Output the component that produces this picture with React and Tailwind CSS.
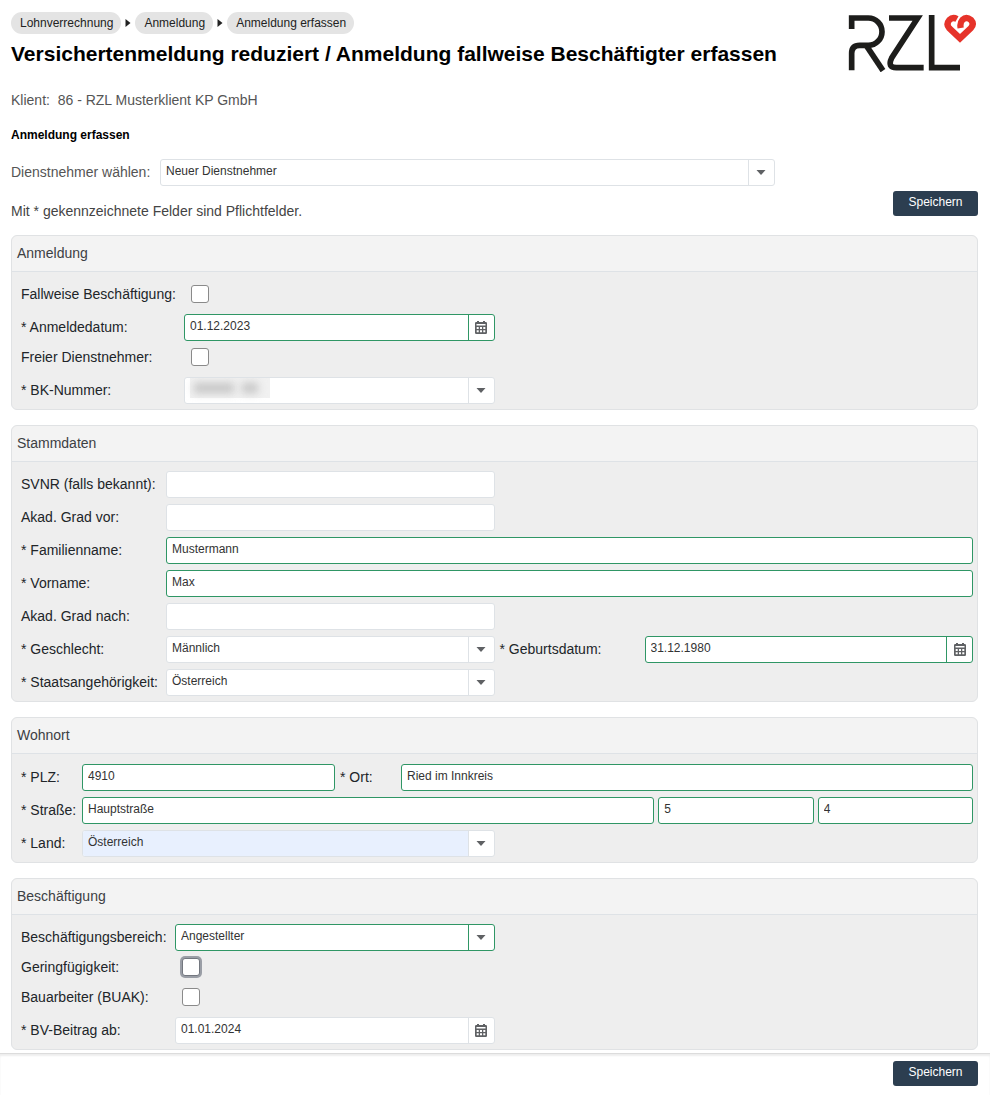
import React, { useId } from "react";

const FONT = "font-['Liberation_Sans',Arial,sans-serif]";

function Logo() {
  return (
    <svg viewBox="57 40 390 180" className="h-[60px] w-[130px] shrink-0" role="img" aria-label="RZL">
      <g fill="none" stroke="#1d1d1b" strokeWidth="17">
        <path d="M68 91V58H118A41 41 0 0 1 118 140H92Q68 140 68 164V215" />
        <path d="M114 144L162 216" />
        <path d="M180 58H266L188 178Q174 207 202 207H284" />
        <path d="M308 49V207H393" />
      </g>
      <path
        d="M384 61Q371 54 361 64Q350 77 361 89L393 119L425 89Q437 76 426 64Q412 52 400 64Q392 73 395 88"
        fill="none"
        stroke="#e6332a"
        strokeWidth="19"
      />
    </svg>
  );
}

function CalendarIcon() {
  return (
    <svg viewBox="0 0 12 13" className="h-[13px] w-3" aria-hidden="true">
      <path
        fill="#5f6164"
        fillRule="evenodd"
        d="M2 0h2v1h4V0h2v1h.8Q12 1 12 2.200V11.800Q12 13 10.800 13H1.200Q0 13 0 11.800V2.200Q0 1 1.200 1H2zM1.500 3v1.500h9V3zM1.700 6v2h2V6zM5 6v2h2V6zM8.300 6v2h2V6zM1.700 9.300v2h2v-2zM5 9.300v2h2v-2zM8.300 9.300v2h2v-2z"
      />
    </svg>
  );
}

function Caret() {
  return (
    <svg viewBox="0 0 10 5" className="h-[5px] w-[10px]" aria-hidden="true">
      <path d="M0.500 0h9L5 5z" fill="#5f6164" />
    </svg>
  );
}

const FRAME = "flex h-[27px] min-w-0 flex-1 overflow-hidden rounded-[3px] border bg-white";
const CONTROL = "min-w-0 flex-1 appearance-none bg-transparent pb-1 pl-[5px] text-[12px] text-[#333] outline-none";

function Frame({ valid, children }) {
  return <div className={`${FRAME} ${valid ? "border-[#2f9665]" : "border-[#dee2e6]"}`}>{children}</div>;
}

function TextBox({ id, value = "", valid, label }) {
  return (
    <Frame valid={valid}>
      <input id={id} type="text" aria-label={label} defaultValue={value} className={CONTROL} />
    </Frame>
  );
}

function DateBox({ id, value, valid }) {
  return (
    <Frame valid={valid}>
      <input id={id} type="text" defaultValue={value} className={CONTROL} />
      <button
        type="button"
        aria-label="Kalender"
        className={`flex w-[26px] items-center justify-center border-l ${valid ? "border-[#2f9665]" : "border-[#dee2e6]"}`}
      >
        <CalendarIcon />
      </button>
    </Frame>
  );
}

function SelectBox({ id, value, valid, tinted, hidden }) {
  return (
    <Frame valid={valid}>
      <div className={`flex min-w-0 flex-1 items-stretch ${tinted ? "bg-[#e8f0fe]" : ""}`}>
        {hidden && (
          <span className="ml-[5px] flex h-5 w-20 items-center gap-2 bg-[#f1f1f1] pl-1">
            <span className="block h-[10px] w-10 bg-[#c4c4c4] blur-xs" />
            <span className="block h-[10px] w-4 bg-[#c4c4c4] blur-xs" />
          </span>
        )}
        <select id={id} className={CONTROL}>
          <option>{value}</option>
        </select>
      </div>
      <span
        className={`flex w-[26px] items-center justify-center border-l ${valid ? "border-[#2f9665]" : "border-[#dee2e6]"}`}
      >
        <Caret />
      </span>
    </Frame>
  );
}

function Field({ label, labelWidth, labelColor = "text-[#212529]", as: Box, className = "", ...rest }) {
  const id = useId();
  return (
    <div className={`flex min-w-0 items-center ${className}`}>
      <label htmlFor={id} className={`shrink-0 text-[14px] whitespace-nowrap ${labelColor} ${labelWidth}`}>
        {label}
      </label>
      <Box id={id} {...rest} />
    </div>
  );
}

function Check({ label, labelWidth, focused }) {
  const id = useId();
  return (
    <div className="flex h-6 items-center pb-1">
      <label htmlFor={id} className={`shrink-0 text-[14px] whitespace-nowrap text-[#212529] ${labelWidth}`}>
        {label}
      </label>
      <input
        id={id}
        type="checkbox"
        className={`ml-[7px] h-[18px] w-[18px] appearance-none rounded-[3px] border bg-white ${
          focused ? "border-[#73777f] ring-2 ring-[#9a9ea6]" : "border-[#8a8a8a]"
        }`}
      />
    </div>
  );
}

function Panel({ title, top = "pt-[9px]", children }) {
  return (
    <section className="rounded-md border border-[#e0e2e4] bg-[#eee]">
      <h2 className="flex h-9 items-center rounded-t-md border-b border-[#dee2e6] bg-[#f3f3f3] px-[5px] text-[14px] text-[#3c4043]">
        {title}
      </h2>
      <div className={`grid gap-x-[5px] gap-y-[6px] pr-1 pb-[5px] pl-[9px] ${top}`}>{children}</div>
    </section>
  );
}

function Half({ children }) {
  return <div className="grid grid-cols-2 gap-x-[5px]">{children}</div>;
}

function SaveButton() {
  return (
    <button type="button" className="h-[25px] w-[85px] shrink-0 rounded-[3px] bg-[#2c3e50] pb-[3px] text-[12px] text-white">
      Speichern
    </button>
  );
}

function Crumbs() {
  const items = ["Lohnverrechnung", "Anmeldung", "Anmeldung erfassen"];
  return (
    <nav aria-label="Navigationspfad" className="flex items-center">
      {items.map((item, i) => (
        <React.Fragment key={item}>
          {i > 0 && (
            <svg viewBox="0 0 5 8" className="mx-1 h-2 w-[6px]" aria-hidden="true">
              <path d="M0 0l5 4-5 4z" fill="#222" />
            </svg>
          )}
          <a href="#" className="flex h-[22px] items-center rounded-full bg-[#e4e4e4] pr-2 pl-[9px] text-[12px] text-[#222]">
            {item}
          </a>
        </React.Fragment>
      ))}
    </nav>
  );
}

export default function App() {
  const a = "w-[163px]";
  const s = "w-[145px]";
  const w = "w-[61px]";
  const b = "w-[154px]";
  return (
    <div className={`bg-white ${FONT}`}>
      <main className="pt-3 pr-3 pb-[3px] pl-[11px]">
        <header className="flex items-start justify-between">
          <div>
            <Crumbs />
            <h1 className="mt-1 text-[21px] leading-8 font-bold whitespace-nowrap text-black">
              Versichertenmeldung reduziert / Anmeldung fallweise Beschäftigter erfassen
            </h1>
          </div>
          <Logo />
        </header>
        <p className="mt-[18px] text-[14px] leading-5 whitespace-pre text-[#555]">Klient:  86 - RZL Musterklient KP GmbH</p>
        <h2 className="mt-[15px] text-[12px] leading-5 font-bold text-black">Anmeldung erfassen</h2>
        <div className="mt-[14px] w-[79%]">
          <Field
            label="Dienstnehmer wählen:"
            labelWidth="w-[149px]"
            labelColor="text-[#555]"
            as={SelectBox}
            value="Neuer Dienstnehmer"
          />
        </div>
        <div className="mt-[5px] mb-[14px] flex items-start justify-between">
          <p className="mt-[10px] text-[14px] leading-5 text-[#444]">Mit * gekennzeichnete Felder sind Pflichtfelder.</p>
          <SaveButton />
        </div>

        <form className="flex flex-col gap-[15px]">
          <Panel title="Anmeldung" top="pt-3">
            <Check label="Fallweise Beschäftigung:" labelWidth={a} />
            <Half>
              <Field label="* Anmeldedatum:" labelWidth={a} as={DateBox} value="01.12.2023" valid />
            </Half>
            <Check label="Freier Dienstnehmer:" labelWidth={a} />
            <Half>
              <Field label="* BK-Nummer:" labelWidth={a} as={SelectBox} value="" hidden />
            </Half>
          </Panel>

          <Panel title="Stammdaten">
            <Half>
              <Field label="SVNR (falls bekannt):" labelWidth={s} as={TextBox} />
            </Half>
            <Half>
              <Field label="Akad. Grad vor:" labelWidth={s} as={TextBox} />
            </Half>
            <Field label="* Familienname:" labelWidth={s} as={TextBox} value="Mustermann" valid />
            <Field label="* Vorname:" labelWidth={s} as={TextBox} value="Max" valid />
            <Half>
              <Field label="Akad. Grad nach:" labelWidth={s} as={TextBox} />
            </Half>
            <Half>
              <Field label="* Geschlecht:" labelWidth={s} as={SelectBox} value="Männlich" />
              <Field label="* Geburtsdatum:" labelWidth={s} as={DateBox} value="31.12.1980" valid />
            </Half>
            <Half>
              <Field label="* Staatsangehörigkeit:" labelWidth={s} as={SelectBox} value="Österreich" />
            </Half>
          </Panel>

          <Panel title="Wohnort" top="pt-[10px]">
            <div className="grid grid-cols-3 gap-x-[5px]">
              <Field label="* PLZ:" labelWidth={w} as={TextBox} value="4910" valid />
              <Field className="col-span-2" label="* Ort:" labelWidth={w} as={TextBox} value="Ried im Innkreis" valid />
            </div>
            <div className="grid grid-cols-6 gap-x-[4px]">
              <Field className="col-span-4" label="* Straße:" labelWidth={w} as={TextBox} value="Hauptstraße" valid />
              <TextBox label="Hausnummer" value="5" valid />
              <TextBox label="Türnummer" value="4" valid />
            </div>
            <Half>
              <Field label="* Land:" labelWidth={w} as={SelectBox} value="Österreich" tinted />
            </Half>
          </Panel>

          <Panel title="Beschäftigung">
            <Half>
              <Field label="Beschäftigungsbereich:" labelWidth={b} as={SelectBox} value="Angestellter" valid />
            </Half>
            <Check label="Geringfügigkeit:" labelWidth={b} focused />
            <Check label="Bauarbeiter (BUAK):" labelWidth={b} />
            <Half>
              <Field label="* BV-Beitrag ab:" labelWidth={b} as={DateBox} value="01.01.2024" />
            </Half>
          </Panel>
        </form>
      </main>
      <footer className="flex justify-end border-t border-[#dcdcdc] px-3 pt-[7px] pb-[10px] shadow-[inset_0_2px_2px_#eeeeee]">
        <SaveButton />
      </footer>
    </div>
  );
}
